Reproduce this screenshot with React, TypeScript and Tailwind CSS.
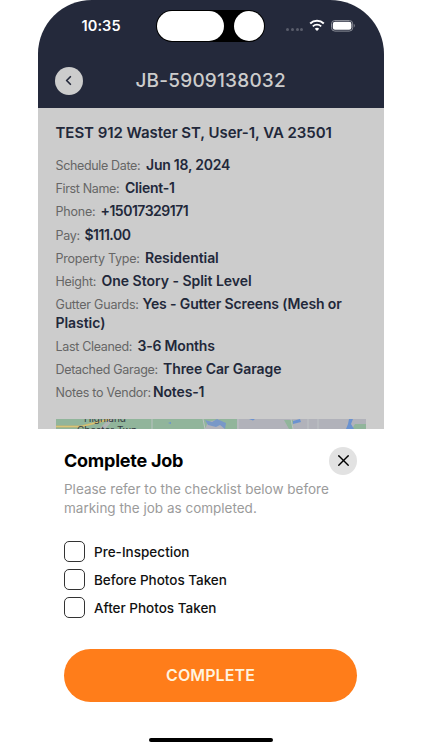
import React, { useState } from 'react';
import { ChevronLeft, X } from 'lucide-react';

interface Detail {
  label: string;
  value: string;
  labelClass: string;
  valueClass: string;
  rest?: string;
}

const details: Detail[] = [
  { label: 'Schedule Date:', value: 'Jun 18, 2024', labelClass: 'w-[90.5px] tracking-[-0.35px]', valueClass: 'tracking-[-0.23px]' },
  { label: 'First Name:', value: 'Client-1', labelClass: 'w-[69.5px] tracking-[-0.35px]', valueClass: 'tracking-[-0.25px]' },
  { label: 'Phone:', value: '+15017329171', labelClass: 'w-[45px] tracking-[-0.2px]', valueClass: 'tracking-[-0.5px]' },
  { label: 'Pay:', value: '$111.00', labelClass: 'w-[29px] tracking-[-0.3px]', valueClass: 'tracking-[-0.5px]' },
  { label: 'Property Type:', value: 'Residential', labelClass: 'w-[89.5px] tracking-[-0.25px]', valueClass: 'tracking-[-0.07px]' },
  { label: 'Height:', value: 'One Story - Split Level', labelClass: 'w-[46px] tracking-[-0.25px]', valueClass: 'tracking-[-0.02px]' },
  { label: 'Gutter Guards:', value: 'Yes - Gutter Screens (Mesh or', rest: 'Plastic)', labelClass: 'w-[87px] tracking-[-0.2px]', valueClass: 'tracking-[-0.14px]' },
  { label: 'Last Cleaned:', value: '3-6 Months', labelClass: 'w-[82px] tracking-[-0.32px]', valueClass: 'tracking-[-0.2px]' },
  { label: 'Detached Garage:', value: 'Three Car Garage', labelClass: 'w-[107.5px] tracking-[-0.3px]', valueClass: 'tracking-[-0.08px]' },
  { label: 'Notes to Vendor:', value: 'Notes-1', labelClass: 'w-[97.5px] tracking-[-0.25px]', valueClass: 'tracking-[-0.15px]' },
];

const checklist = [
  { label: 'Pre-Inspection', textClass: 'tracking-[0.02px]' },
  { label: 'Before Photos Taken', textClass: 'tracking-[-0.03px]' },
  { label: 'After Photos Taken', textClass: 'tracking-[-0.01px]' },
];

const StatusBar = () => (
  <div className="relative h-[52px]">
    <span className="absolute left-[43.5px] top-[17px] text-[14.5px] leading-[18px] font-semibold text-white tracking-[0.1px]">10:35</span>
    <div className="absolute left-[118px] top-[10px] flex h-[32px] w-[109px] items-center justify-between rounded-full bg-black px-[1px]">
      <div className="h-[30px] w-[67px] rounded-full bg-white" />
      <div className="h-[30px] w-[30px] rounded-full bg-white" />
    </div>
    <div className="absolute left-[248px] top-[28px] flex gap-[1.8px]">
      {[0, 1, 2, 3].map((i) => (
        <span key={i} className="h-[3px] w-[3px] rounded-full bg-[#5a5e6c]" />
      ))}
    </div>
    <svg className="absolute left-[271px] top-[19px]" width="16" height="13" viewBox="0 0 16 13" fill="none" stroke="white">
      <path d="M1.2 4.5a9.8 9.8 0 0 1 13.6 0" strokeWidth="2" />
      <path d="M3.8 7.3a6.1 6.1 0 0 1 8.4 0" strokeWidth="1.8" />
      <path d="M8 12 5.8 9.7a3.2 3.2 0 0 1 4.4 0Z" fill="white" stroke="none" />
    </svg>
    <svg className="absolute left-[293px] top-[20px]" width="25" height="12" viewBox="0 0 25 12">
      <rect x="0.5" y="0.5" width="21.2" height="10.6" rx="3.4" fill="none" stroke="#8a8d97" />
      <rect x="1.8" y="1.8" width="18.6" height="8" rx="2.2" fill="white" />
      <path d="M22.9 4.1c1 .4 1.3 2.7 0 3.3Z" fill="#8a8d97" />
    </svg>
  </div>
);

const MapStrip = () => (
  <svg className="block w-[310px]" height="10" viewBox="0 0 310 10">
    <rect width="310" height="10" fill="#91b59b" />
    <path d="M43 10 53 0h5L49 10Z" fill="#b1b5b5" />
    <path d="M164 0h146v10H149l3-7Z" fill="#b1b2ba" />
    <path d="M163 0h18v10h-12ZM228 1h9v9h-4ZM299 5h11v5h-14Z" fill="#91b59b" />
    <path d="M0 7.5h25L43 3 54 0" fill="none" stroke="#c7b56f" strokeWidth="2" />
    <path d="M0 7.5h25L43 3 54 0" fill="none" stroke="#e0c978" strokeWidth="0.8" />
    <path d="M96 0v10M147 0l2 10M182 0v10M235 0l2 10M252 0v10M262 0v10" stroke="#bfc5c6" strokeWidth="0.9" />
    <path d="m149 1 7 2 5-3 9 4-1 6-5-4-4 2-8-2Z" fill="#7898c8" />
    <path d="M193 0h6l-2 1.5ZM237 2l7-2 1 3-8 2ZM293 0h4l-2 5 3 5h-8l2-5ZM112 4l3-1v2Z" fill="#6a92d0" />
    <text x="28" y="2.5" fontSize="10" fill="#333b41">Highland</text>
    <text x="21" y="15" fontSize="10" fill="#333b41">Chester Twp</text>
  </svg>
);

const App: React.FC = () => {
  const [checked, setChecked] = useState<number[]>([]);

  const toggle = (i: number) =>
    setChecked((prev) => (prev.includes(i) ? prev.filter((c) => c !== i) : [...prev, i]));

  return (
    <div className="h-[750px] w-[422px] overflow-hidden bg-white font-['Inter',sans-serif]">
      <div className="ml-[38px] flex h-[750px] w-[346px] flex-col">
        <header className="h-[108px] rounded-t-[54px] bg-[#24293b]">
          <StatusBar />
          <div className="flex items-center pl-[17.3px] pt-[14px]">
            <button className="flex h-7 w-7 items-center justify-center rounded-full bg-[#cccccc] text-[#24293b]">
              <ChevronLeft size={15} strokeWidth={2.8} className="-translate-x-[1px]" />
            </button>
            <h1 className="ml-[52.2px] whitespace-nowrap pt-px text-[19px] leading-7 font-medium tracking-[0.2px] text-[#cccccc]">JB-5909138032</h1>
          </div>
        </header>

        <main className="h-[321px] overflow-hidden bg-[#cccccc] px-[17.5px] pt-[14px] text-[#22283a]">
          <h2 className="mb-[13px] whitespace-nowrap text-[15px] leading-[21px] font-semibold tracking-[-0.05px]">
            TEST 912 Waster ST, User-1, VA 23501
          </h2>
          {details.map((d) => (
            <div key={d.label} className="mb-[4.6px] whitespace-nowrap text-[14px] leading-[18.6px] font-semibold">
              <div className="flex h-[18.6px] items-baseline">
                <span className={`shrink-0 text-[12.5px] font-normal text-[#666666] ${d.labelClass}`}>{d.label}</span>
                <span className={d.valueClass}>{d.value}</span>
              </div>
              {d.rest && <div className="h-[18.6px] tracking-[-0.05px]">{d.rest}</div>}
            </div>
          ))}
          <div className="mt-[17.5px]">
            <MapStrip />
          </div>
        </main>

        <section className="flex flex-1 flex-col bg-white pl-[26px] pr-[27px] pt-[18px]">
          <div className="flex items-center justify-between">
            <h3 className="text-[18px] leading-7 font-bold text-black tracking-[-0.25px]">Complete Job</h3>
            <button className="-mt-px flex h-7 w-7 items-center justify-center rounded-full bg-[#e2e2e2] text-black">
              <X size={19} strokeWidth={1.7} />
            </button>
          </div>
          <p className="mt-[5px] whitespace-nowrap text-[13.5px] leading-[18.7px] text-[#9b9b9b]">
            Please refer to the checklist below before<br />
            marking the job as completed.
          </p>
          <div className="mt-[23.5px] flex flex-col gap-[7px]">
            {checklist.map((item, i) => (
              <button key={item.label} onClick={() => toggle(i)} className="flex h-[21px] items-center gap-[9px] text-left">
                <span className={`h-[21px] w-[21px] rounded-[5px] border border-[#333333] ${checked.includes(i) ? 'bg-[#ff7d1a]' : 'bg-white'}`} />
                <span className={`pt-px text-[13.5px] font-medium text-[#111111] ${item.textClass}`}>{item.label}</span>
              </button>
            ))}
          </div>
          <button className="mt-[31px] h-[53px] w-[293px] rounded-full bg-[#ff7d1a] text-[16px] font-semibold text-[#fff3df] tracking-[0.1px]">
            COMPLETE
          </button>
          <div className="ml-[85px] mt-[36px] h-[4.5px] w-[124px] rounded-full bg-black" />
        </section>
      </div>
    </div>
  );
};

export default App;
